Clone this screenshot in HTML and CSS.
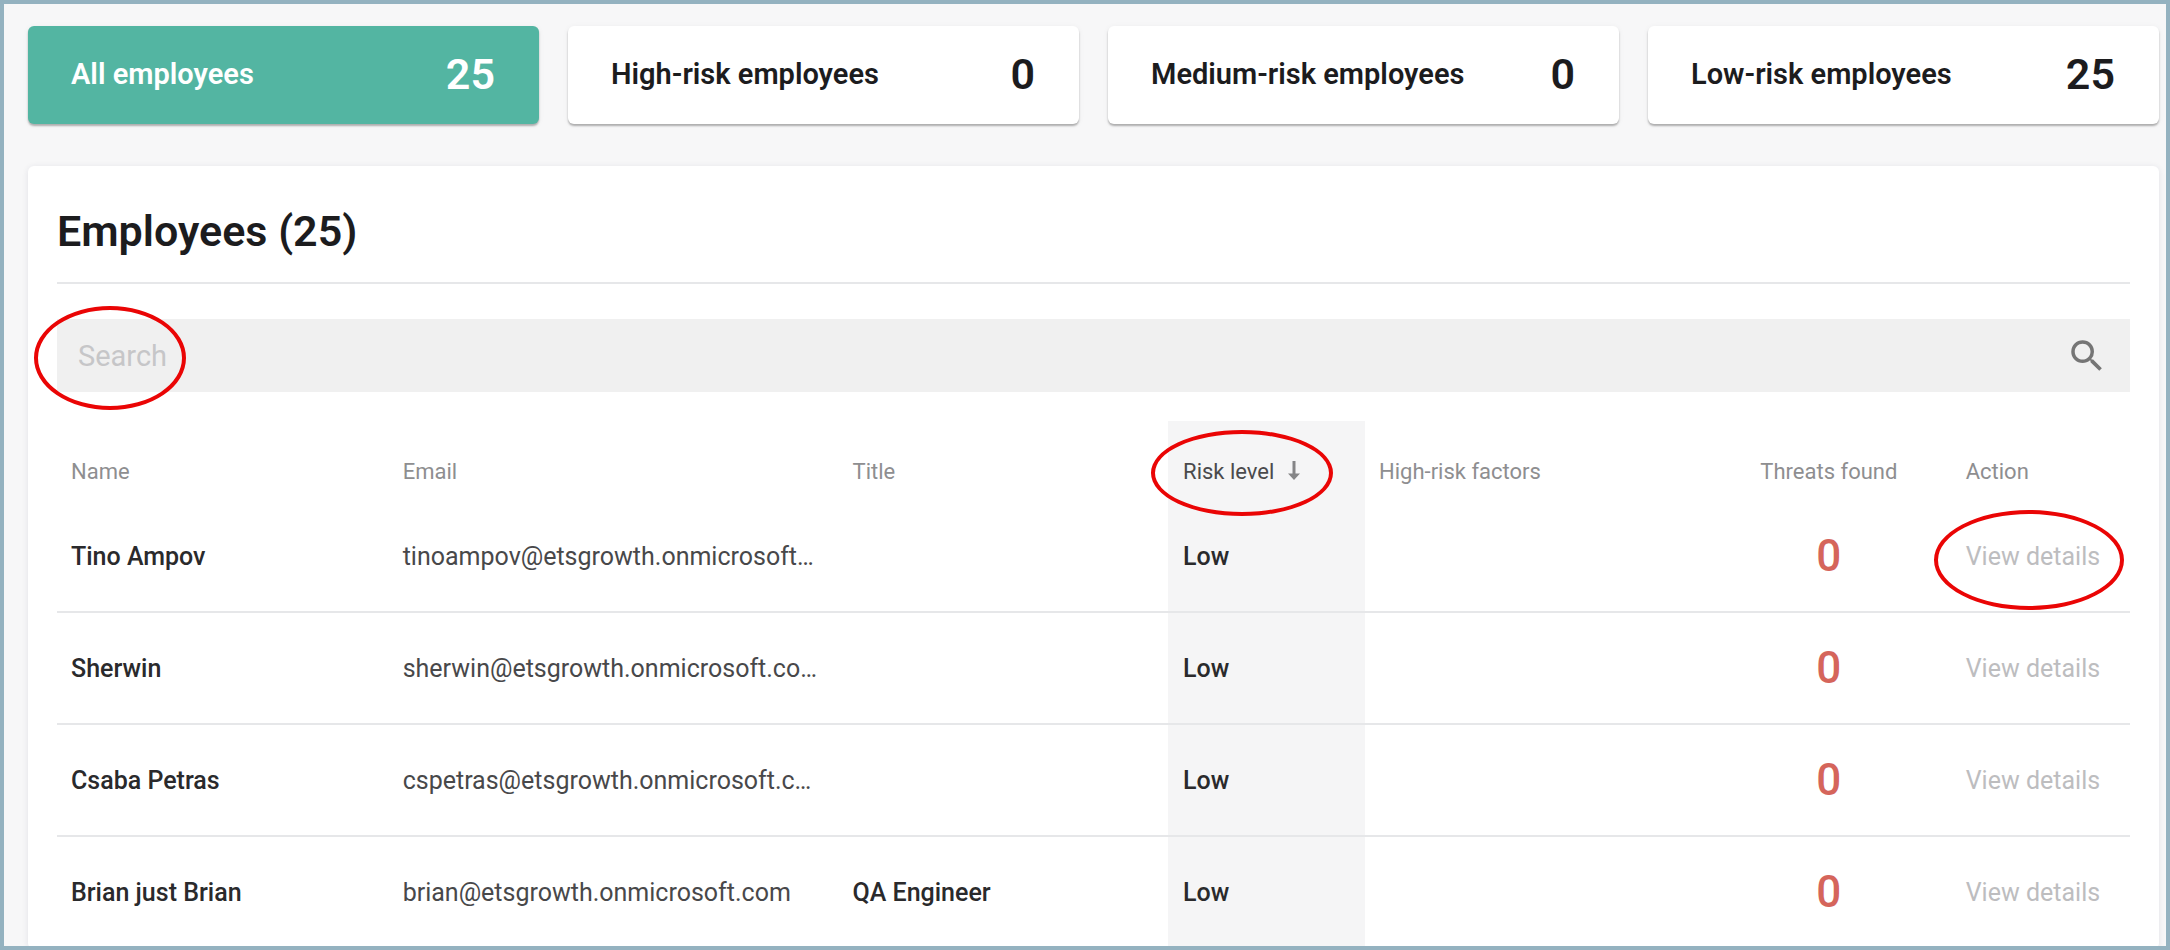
FILE: index.html
```html
<!DOCTYPE html>
<html lang="en">
<head>
<meta charset="utf-8">
<meta name="viewport" content="width=device-width, initial-scale=1">
<title>Employees</title>
<link rel="stylesheet" href="styles.css">
</head>
<body>
<main class="page">
  <nav class="summary" aria-label="Risk filter">
    <button class="card card-active" type="button"><span class="card-label">All employees</span><span class="card-count">25</span></button>
    <button class="card" type="button"><span class="card-label">High-risk employees</span><span class="card-count">0</span></button>
    <button class="card" type="button"><span class="card-label">Medium-risk employees</span><span class="card-count">0</span></button>
    <button class="card" type="button"><span class="card-label">Low-risk employees</span><span class="card-count">25</span></button>
  </nav>

  <section class="panel">
    <h1 class="panel-title">Employees (25)</h1>
    <form class="search">
      <input class="search-input" type="text" placeholder="Search" aria-label="Search">
      <button class="search-button" type="button" aria-label="Submit search">
        <svg class="search-icon" viewBox="0 0 24 24" aria-hidden="true"><path d="M15.5 14h-.79l-.28-.27A6.471 6.471 0 0 0 16 9.5 6.5 6.5 0 1 0 9.5 16c1.61 0 3.09-.59 4.23-1.57l.27.28v.79l5 4.99L20.49 19l-4.99-5zm-6 0C7.01 14 5 11.99 5 9.5S7.01 5 9.5 5 14 7.01 14 9.5 11.99 14 9.5 14z"/></svg>
      </button>
      <span class="ring ring-search"></span>
    </form>

    <table class="employees">
      <colgroup>
        <col class="col-name"><col class="col-email"><col class="col-title"><col class="col-risk"><col class="col-factors"><col class="col-threats"><col class="col-action">
      </colgroup>
      <thead>
        <tr>
          <th scope="col">Name</th>
          <th scope="col">Email</th>
          <th scope="col">Title</th>
          <th scope="col" class="risk" aria-sort="descending">
            <button class="sort" type="button">Risk level
              <svg class="sort-icon" viewBox="0 0 12 20" aria-hidden="true"><path d="M4.5 0h3v12.500H12L6 19 0 12.500h4.500z"/></svg>
            </button>
            <span class="ring ring-sort"></span>
          </th>
          <th scope="col">High-risk factors</th>
          <th scope="col" class="threats-head">Threats found</th>
          <th scope="col">Action</th>
        </tr>
      </thead>
      <tbody>
        <tr>
          <td class="strong">Tino Ampov</td>
          <td class="email">tinoampov@etsgrowth.onmicrosoft.com</td>
          <td class="strong"></td>
          <td class="strong risk">Low</td>
          <td></td>
          <td class="threats">0</td>
          <td class="action"><a class="details" href="#tino">View details</a><span class="ring ring-details"></span></td>
        </tr>
        <tr>
          <td class="strong">Sherwin</td>
          <td class="email">sherwin@etsgrowth.onmicrosoft.com</td>
          <td class="strong"></td>
          <td class="strong risk">Low</td>
          <td></td>
          <td class="threats">0</td>
          <td class="action"><a class="details" href="#sherwin">View details</a></td>
        </tr>
        <tr>
          <td class="strong">Csaba Petras</td>
          <td class="email">cspetras@etsgrowth.onmicrosoft.com</td>
          <td class="strong"></td>
          <td class="strong risk">Low</td>
          <td></td>
          <td class="threats">0</td>
          <td class="action"><a class="details" href="#csaba">View details</a></td>
        </tr>
        <tr>
          <td class="strong">Brian just Brian</td>
          <td class="email">brian@etsgrowth.onmicrosoft.com</td>
          <td class="strong">QA Engineer</td>
          <td class="strong risk">Low</td>
          <td></td>
          <td class="threats">0</td>
          <td class="action"><a class="details" href="#brian">View details</a></td>
        </tr>
      </tbody>
    </table>
  </section>
</main>
</body>
</html>
```
FILE: styles.css
```css
* {
  box-sizing: border-box;
}

body {
  margin: 0;
  font-family: Roboto, "Liberation Sans", sans-serif;
  color: #1c1c1e;
}

button,
input {
  font: inherit;
  color: inherit;
  border: 0;
  background: none;
}

.page {
  height: 100vh;
  overflow: hidden;
  border: 4px solid #94b2c0;
  padding: 22px 7px 0 24px;
  background: #f7f7f8;
  display: flex;
  flex-direction: column;
  gap: 42px;
}

.summary {
  display: grid;
  grid-template-columns: repeat(4, 1fr);
  gap: 29px;
}

.card {
  height: 98px;
  padding: 0 44px 2px 43px;
  display: flex;
  align-items: center;
  justify-content: space-between;
  border-radius: 6px;
  background: #fff;
  box-shadow: 0 2px 2px rgba(0, 0, 0, 0.28), 0 1px 6px rgba(0, 0, 0, 0.05);
  font-weight: 600;
  cursor: pointer;
}

.card-active {
  background: #53b5a2;
  color: #fff;
}

.card-label {
  font-size: 29px;
}

.card-count {
  font-size: 43px;
}

.panel {
  flex: none;
  padding: 37px 29px 0;
  border-radius: 6px;
  background: #fff;
  box-shadow: 0 1px 6px rgba(40, 40, 80, 0.1);
}

.panel-title {
  margin: 0;
  padding-bottom: 23px;
  border-bottom: 2px solid #e6e7e9;
  font-size: 43px;
  line-height: 56px;
  font-weight: 600;
}

.search {
  position: relative;
  display: flex;
  margin: 35px 0 29px;
  height: 73px;
  background: #f0f0f0;
}

.search-input {
  flex: 1;
  min-width: 0;
  padding: 0 21px;
  font-size: 29px;
}

.search-input::placeholder {
  color: #c6c6c8;
  opacity: 1;
}

.search-button {
  padding: 0 22px;
  display: flex;
  align-items: center;
  cursor: pointer;
}

.search-icon {
  width: 42px;
  height: 42px;
  fill: #757575;
}

.employees {
  width: 100%;
  table-layout: fixed;
  border-collapse: separate;
  border-spacing: 0;
  text-align: left;
}

.col-name { width: 16%; }
.col-email { width: 21.7%; }
.col-title { width: 15.9%; }
.col-risk { width: 9.5%; }
.col-factors { width: 16.5%; }
.col-threats { width: 11.8%; }
.col-action { width: 8.6%; }

.employees th {
  height: 80px;
  padding: 20px 15px 0 14px;
  font-size: 22px;
  font-weight: 400;
  color: #8e8e90;
  white-space: nowrap;
}

.employees td {
  height: 112px;
  padding: 0 15px 0 14px;
  border-bottom: 2px solid #e6e7e9;
  font-size: 25px;
  color: #48484a;
  white-space: nowrap;
}

.employees .strong {
  font-weight: 500;
  color: #2a2a2c;
}

.employees .email {
  padding-right: 20px;
  overflow: hidden;
  text-overflow: ellipsis;
}

.employees .risk {
  position: relative;
  padding-left: 15px;
  background: #f5f5f6;
}

.employees .threats-head {
  text-align: center;
}

.employees .threats {
  text-align: center;
  font-size: 44px;
  font-weight: 500;
  color: #d5655b;
}

.employees .action {
  position: relative;
}

.sort {
  padding: 0;
  display: flex;
  align-items: center;
  gap: 14px;
  color: #4a4a4c;
  cursor: pointer;
}

.sort-icon {
  width: 12px;
  height: 20px;
  fill: #858587;
}

.details {
  color: #bdbdbf;
  text-decoration: none;
}

.ring {
  position: absolute;
  border: 4px solid #ea0505;
  border-radius: 50%;
  pointer-events: none;
}

.ring-search {
  left: -23px;
  top: -13px;
  width: 152px;
  height: 104px;
}

.ring-sort {
  left: -17px;
  top: 9px;
  width: 182px;
  height: 86px;
  z-index: 1;
}

.ring-details {
  left: -18px;
  top: 9px;
  width: 190px;
  height: 100px;
}
```
